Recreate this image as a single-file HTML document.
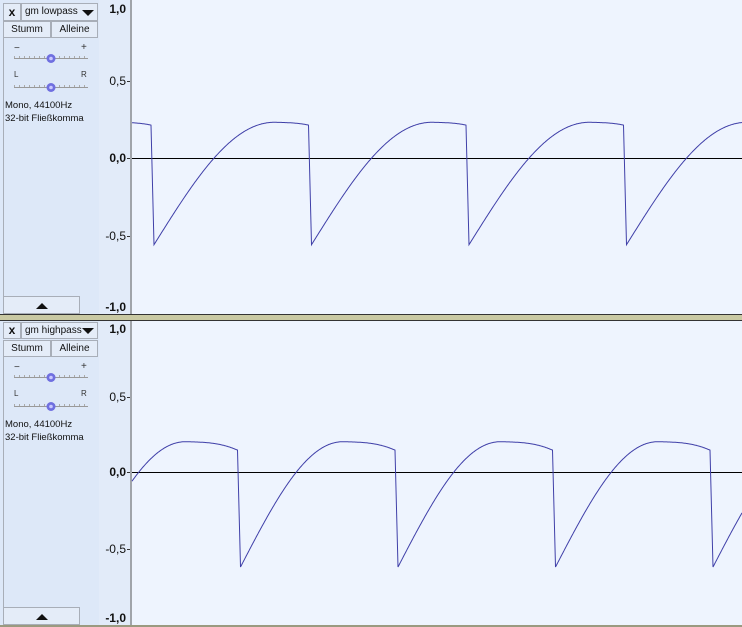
<!DOCTYPE html>
<html><head><meta charset="utf-8"><style>
body{margin:0;width:742px;height:627px;overflow:hidden;background:#c9c9a3;font-family:"Liberation Sans",sans-serif;position:relative}
.abs{position:absolute}
.btn{position:absolute;background:#e4ecf8;border:1px solid #a8aeb8;font-size:10px;color:#111;text-align:center;box-sizing:border-box;white-space:nowrap;overflow:hidden}
.ruler{position:absolute;left:99px;width:31px;background:#e2ebf9;border-right:2px solid #a0a4aa}
.wave{position:absolute;left:132px;width:610px;background:#eef4fe}
.lab{position:absolute;right:4px;font-size:12px;color:#111;font-weight:bold}
.lab.n{font-weight:normal}
.tick{position:absolute;right:0;width:3px;height:1px;background:#333}
.info{position:absolute;left:5px;font-size:9.5px;line-height:13px;color:#111}
</style></head><body>
<div class="abs" style="left:0;top:314px;width:742px;height:1px;background:#333"></div>
<div class="abs" style="left:0;top:320px;width:742px;height:1px;background:#333"></div>

<div class="abs" style="left:0;top:0;width:742px;height:314px;background:#dde8f8"></div>
<div class="btn" style="left:3px;top:3px;width:18px;height:18px;font-weight:bold;font-size:12px;line-height:16px">x</div>
<div class="btn" style="left:21px;top:3px;width:77px;height:18px;text-align:left;padding-left:3px;line-height:16px">gm lowpass<span style="position:absolute;right:3px;top:6px;width:0;height:0;border-left:6px solid transparent;border-right:6px solid transparent;border-top:6px solid #111"></span></div>
<div class="btn" style="left:3px;top:21px;width:48px;height:17px;line-height:15px">Stumm</div>
<div class="btn" style="left:51px;top:21px;width:47px;height:17px;line-height:15px">Alleine</div>
<div class="abs" style="left:3px;top:38px;width:95px;height:276px;border-left:1px solid #a8aeb8"></div>
<div class="info" style="top:99px">Mono, 44100Hz<br>32-bit Fließkomma</div>
<div class="btn" style="left:3px;top:296px;width:77px;height:18px"><span style="position:absolute;left:32px;top:6px;border-left:6px solid transparent;border-right:6px solid transparent;border-bottom:6px solid #111"></span></div>
<div class="ruler" style="top:0;height:314px">
<div class="lab" style="top:2px">1,0</div>
<div class="lab n" style="top:74px">0,5</div><div class="tick" style="top:81px"></div>
<div class="lab" style="top:151px">0,0</div><div class="tick" style="top:158px"></div>
<div class="lab n" style="top:229px">-0,5</div><div class="tick" style="top:236px"></div>
<div class="lab" style="top:300px">-1,0</div>
</div>
<div class="wave" style="top:0;height:314px"></div>

<div class="abs" style="left:0;top:321px;width:742px;height:306px;background:#dde8f8"></div>
<div class="btn" style="left:3px;top:322px;width:18px;height:17px;font-weight:bold;font-size:12px;line-height:15px">x</div>
<div class="btn" style="left:21px;top:322px;width:77px;height:17px;text-align:left;padding-left:3px;line-height:15px">gm highpass<span style="position:absolute;right:3px;top:5px;width:0;height:0;border-left:6px solid transparent;border-right:6px solid transparent;border-top:6px solid #111"></span></div>
<div class="btn" style="left:3px;top:340px;width:48px;height:17px;line-height:15px">Stumm</div>
<div class="btn" style="left:51px;top:340px;width:47px;height:17px;line-height:15px">Alleine</div>
<div class="abs" style="left:3px;top:357px;width:95px;height:268px;border-left:1px solid #a8aeb8"></div>
<div class="info" style="top:418px">Mono, 44100Hz<br>32-bit Fließkomma</div>
<div class="btn" style="left:3px;top:607px;width:77px;height:18px"><span style="position:absolute;left:32px;top:6px;border-left:6px solid transparent;border-right:6px solid transparent;border-bottom:6px solid #111"></span></div>
<div class="ruler" style="top:321px;height:304px">
<div class="lab" style="top:1px">1,0</div>
<div class="lab n" style="top:69px">0,5</div><div class="tick" style="top:76px"></div>
<div class="lab" style="top:144px">0,0</div><div class="tick" style="top:151px"></div>
<div class="lab n" style="top:221px">-0,5</div><div class="tick" style="top:228px"></div>
<div class="lab" style="top:290px">-1,0</div>
</div>
<div class="wave" style="top:321px;height:304px"></div>
<div class="abs" style="left:0;top:625px;width:742px;height:2px;background:#9a9a80"></div>

<svg class="abs" style="left:0;top:0" width="742" height="627">
<g id="sl"></g>
<line x1="132" y1="158.5" x2="742" y2="158.5" stroke="#000" stroke-width="1"/>
<line x1="132" y1="472.5" x2="742" y2="472.5" stroke="#000" stroke-width="1"/>
<path id="w1" fill="none" stroke="#3f3fa8" stroke-width="1"/>
<path id="w2" fill="none" stroke="#3f3fa8" stroke-width="1"/>
</svg>
<div class="abs" style="left:14px;top:43px;font-size:10px;color:#333">−</div>
<div class="abs" style="left:81px;top:42px;font-size:10px;color:#333">+</div>
<div class="abs" style="left:14px;top:70px;font-size:8px;color:#333">L</div>
<div class="abs" style="left:81px;top:70px;font-size:8px;color:#333">R</div>
<div class="abs" style="left:14px;top:362px;font-size:10px;color:#333">−</div>
<div class="abs" style="left:81px;top:361px;font-size:10px;color:#333">+</div>
<div class="abs" style="left:14px;top:389px;font-size:8px;color:#333">L</div>
<div class="abs" style="left:81px;top:389px;font-size:8px;color:#333">R</div>
<script>
var sl='';
[58,87,377,406].forEach(function(y){
 sl+='<line x1="14" y1="'+(y+0.5)+'" x2="88" y2="'+(y+0.5)+'" stroke="#999"/>';
 for(var x=14;x<=88;x+=5)sl+='<line x1="'+(x+0.5)+'" y1="'+(y-2)+'" x2="'+(x+0.5)+'" y2="'+y+'" stroke="#aaa"/>';
 sl+='<circle cx="51" cy="'+(y+0.5)+'" r="4.5" fill="#6f6fe0"/><circle cx="51" cy="'+(y+0.5)+'" r="1.8" fill="#c8c8ff"/>';
});
document.getElementById('sl').innerHTML=sl;
function f(t,L,H,T){
 if(t<T) return L+(H-L)*Math.sin(Math.PI/2*t/T);
 return H-0.00000035*Math.pow(t-T,3)-0.0001*(t-T);
}
function wave(id,zero,unit,drop0,P,L,H,T){
 var d='';
 var end=f(P-3,L,H,T);
 for(var x=132;x<=742;x+=0.5){
  var t=((x-drop0)%P+P)%P, v;
  if(t<3){v=end+(L-end)*(t/3);} else {v=f(t-3,L,H,T);}
  var y=zero-v*unit;
  d+=(x==132?'M':'L')+x+' '+y.toFixed(1);
 }
 document.getElementById(id).setAttribute('d',d);
}
wave('w1',158.5,154,151,157.5,-0.56,0.235,120);
wave('w2',472.5,150,237.5,157.5,-0.63,0.205,102);
</script>
</body></html>
